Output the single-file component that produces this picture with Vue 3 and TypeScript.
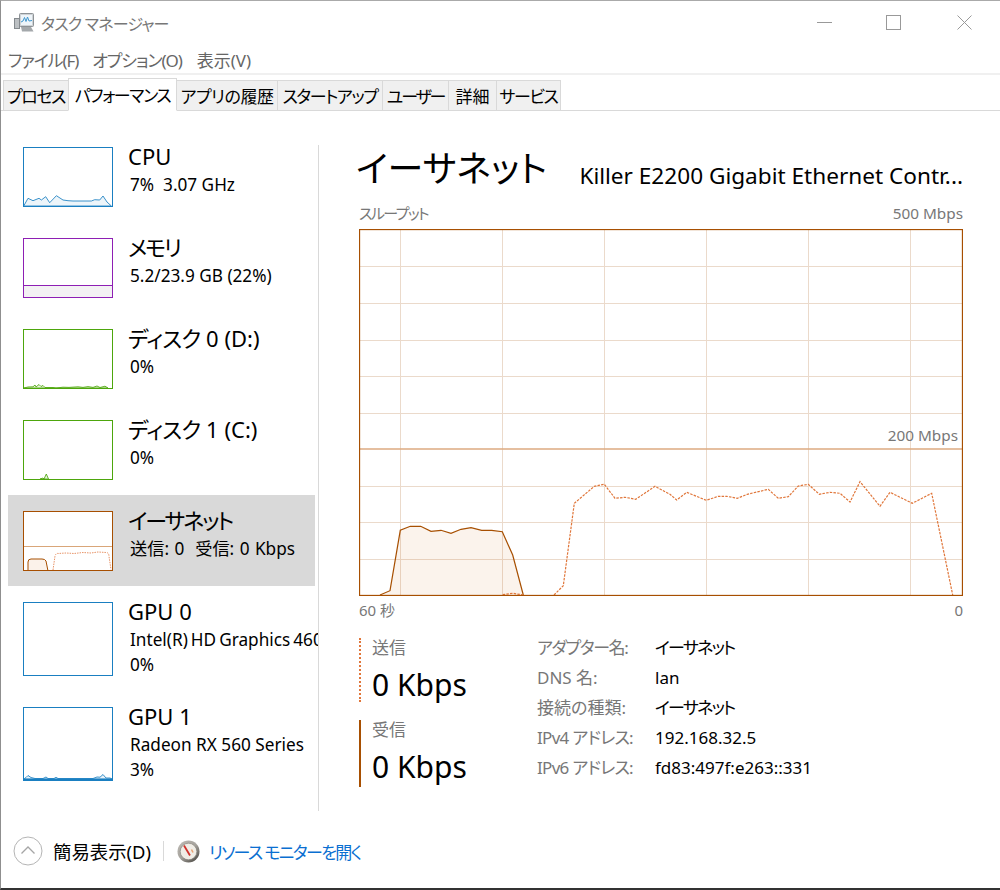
<script setup lang="ts">
interface Side {
  kana?: string
  kanaClass?: string
  rest: string
  lines: string[]
  color: string
  tall?: boolean
  selected?: boolean
  memory?: boolean
  base?: boolean
  narrow?: boolean
  area?: string
  areaFill?: string
}

const tabs = [
  { label: 'プロセス', w: 66, fit: 'tight' },
  { label: 'パフォーマンス', w: 109, active: true, fit: 'tight' },
  { label: 'アプリの履歴', w: 101, fit: 'mid' },
  { label: 'スタートアップ', w: 105, fit: 'tight' },
  { label: 'ユーザー', w: 66, fit: 'tighter' },
  { label: '詳細', w: 48, fit: '' },
  { label: 'サービス', w: 64, fit: 'tight' },
]

const items: Side[] = [
  {
    rest: 'CPU', lines: ['7%  3.07 GHz'], color: '#1a7fc1', areaFill: '#edf5fa',
    area: '0.7,59 5,51.3 10,53.7 16,51.3 18.4,53 22.7,49.7 26.7,55.7 33.4,48.7 40,53 45,53.7 50,54 68.4,54 71.7,52.7 76.7,53 80,49 84,55 88.4,59',
  },
  { kana: 'メモリ', kanaClass: 'kana', rest: '', lines: ['5.2/23.9 GB (22%)'], color: '#8e1fb4', memory: true },
  {
    kana: 'ディスク', kanaClass: 'disk', rest: ' 0 (D:)', lines: ['0%'], color: '#4da60c', areaFill: '#eaf5e0',
    area: '1,59 5,58 10,57.8 12,56 13,58 16,55.5 18,57.5 20,56.5 22,58.5 30,58.5 33,59 40,58.2 46,58.4 55,57.8 60,58.4 65,57.6 70,58.4 74,57 77,58.5 82,57.2 85,59',
  },
  {
    kana: 'ディスク', kanaClass: 'disk', rest: ' 1 (C:)', lines: ['0%'], color: '#4da60c', areaFill: '#eaf5e0',
    area: '17,59 20,58 21,59 23.3,54 25.5,59',
  },
  { kana: 'イーサネット', kanaClass: 'kana', rest: '', lines: ['送信: 0  受信: 0 Kbps'], color: '#a74f01', selected: true },
  { rest: 'GPU 0', lines: ['Intel(R) HD Graphics 4600', '0%'], color: '#1a7fc1', tall: true, narrow: true },
  {
    rest: 'GPU 1', lines: ['Radeon RX 560 Series', '3%'], color: '#1a7fc1', tall: true, base: true, areaFill: '#e8f2f9',
    area: '1,72 3,70.5 5,68.5 8,70.5 12,71.5 20,71.5 23,70 25,71.5 31,71.5 33,70.3 35,71.5 70,71.5 74,70 77,70.2 80,67.5 83,71 87,71 89,72',
  },
]

const details = [
  { label: 'アダプター名:', value: 'イーサネット', lc: 'fit-a', vc: 'fit-c' },
  { label: 'DNS 名:', value: 'lan', lc: '', vc: '' },
  { label: '接続の種類:', value: 'イーサネット', lc: '', vc: 'fit-c' },
  { label: 'IPv4 アドレス:', value: '192.168.32.5', lc: 'fit-b', vc: '' },
  { label: 'IPv6 アドレス:', value: 'fd83:497f:e263::331', lc: 'fit-b', vc: '' },
]

// Graph geometry: 604 x 367 canvas whose origin is the chart's outer corner (359, 229).
const ox = 359
const oy = 229
const W = 604
const H = 367

const shift = (pts: number[][]): string => pts.map(([x, y]) => `${x - ox},${y - oy}`).join(' ')

const hLines = [266, 303, 340, 376, 413, 486, 522, 559].map((y) => y - oy)
const vLines = [400, 502, 604, 706, 808, 910].map((x) => x - ox)

const recvPts = shift([
  [380, 595], [390, 590.7], [400.3, 530.3], [410.3, 526.3], [420.7, 526.3], [431, 531.3], [441, 530.3], [451, 533.3],
  [461, 529.3], [471, 527.7], [481.7, 530.3], [491.7, 530.3], [502.3, 531.7], [512.7, 555], [523.3, 595],
])

const sendA = shift([[502.7, 594.7], [512.7, 593.3], [523.3, 595]])
const sendB = shift([
  [554, 595], [563.3, 585.7], [574.3, 503.3], [594.3, 486.3], [604.3, 484.3], [615, 498.3], [625, 497.3], [635.7, 499.3],
  [655, 486.3], [660, 489], [670, 494.3], [676.7, 500], [686.7, 492.3], [706.3, 500.3], [718.3, 496.3], [726.7, 496.3],
  [737.3, 498.3], [747.3, 494.3], [768.3, 489.3], [778.3, 498.3], [788.3, 496.7], [798.3, 486], [808.3, 484.3],
  [819.3, 494.3], [830, 492.3], [840, 493.3], [850, 502], [860, 481.7], [880, 506.3], [890, 492.3], [912.3, 503.3],
  [931.7, 493.3], [952.7, 595],
])
</script>

<template>
  <div class="window">
    <header class="titlebar">
      <svg class="appicon" width="21" height="21" viewBox="0 0 21 21">
        <rect x="5.500" y="1.500" width="14" height="13" rx="1" fill="#cfd3d6" stroke="#8d9296" />
        <rect x="7" y="3" width="11" height="10" fill="#eef5fa" />
        <polyline points="7,10 9,9 10.500,5.500 12,9.500 13.500,5 15,9 18,8.500" fill="none" stroke="#3f97cf" stroke-width="1" />
        <rect x="0.500" y="6.500" width="5" height="10" fill="#bcc0c3" stroke="#858a8e" />
        <path d="M7 15h10l2.500 4.500H8z" fill="#a4a8ab" />
      </svg>
      <span class="apptitle">タスク マネージャー</span>
      <div class="controls">
        <svg width="15" height="15" viewBox="0 0 15 15"><path d="M0 7.500h15" stroke="#999" fill="none" /></svg>
        <svg width="15" height="15" viewBox="0 0 15 15"><rect x="0.500" y="0.500" width="14" height="14" stroke="#999" fill="none" /></svg>
        <svg class="closebtn" width="15" height="15" viewBox="0 0 15 15"><path d="M0.500 0.500l14 14M14.500 0.500l-14 14" stroke="#999" fill="none" /></svg>
      </div>
    </header>

    <nav class="menu">
      <span class="squeeze">ファイル(F)</span>
      <span class="squeeze">オプション(O)</span>
      <span class="plain">表示(V)</span>
    </nav>

    <div class="tabs">
      <div
        v-for="t in tabs"
        :key="t.label"
        class="tab"
        :class="[t.fit, { active: t.active }]"
        :style="{ width: t.w + 'px' }"
      >{{ t.label }}</div>
    </div>

    <main class="body">
      <aside class="side">
        <div
          v-for="it in items"
          :key="it.kana + it.rest"
          class="item"
          :class="{ selected: it.selected, tall: it.tall, narrow: it.narrow }"
        >
          <div class="thumb" :style="{ borderColor: it.color }">
            <svg :width="88" :height="it.tall ? 72 : 58" :viewBox="it.tall ? '1 1 88 72' : '1 1 88 58'">
              <polygon v-if="it.area" :points="it.area" :fill="it.areaFill" :stroke="it.color" stroke-width="1" stroke-opacity="0.85" />
              <template v-if="it.memory">
                <rect x="0" y="47.500" width="90" height="13" fill="#f3f1f3" />
                <path d="M0 47.500h90" stroke="#8e1fb4" />
              </template>
              <template v-if="it.selected">
                <path d="M0 35.500h90" stroke="#d9a679" />
                <path d="M5 60V51q0-3 3-3h11q3 0 4 2l2 10z" fill="#fbf2ea" stroke="#a74f01" />
                <path d="M30 59l2-14q1-3 3-2.500l8-.5 8 .5 9-1 8 .5 7-1 8 .5q3 0 3 4l2 13" fill="none" stroke="#e89468" stroke-dasharray="1.500 1" />
              </template>
              <path v-if="it.base" d="M0 72.500h90" stroke="#1a7fc1" stroke-width="1.500" />
            </svg>
          </div>
          <div class="itext">
            <div class="iname"><span v-if="it.kana" :class="it.kanaClass">{{ it.kana }}</span>{{ it.rest }}</div>
            <div v-for="l in it.lines" :key="l" class="iline">{{ l }}</div>
          </div>
        </div>
      </aside>

      <section class="panel">
        <div class="phead">
          <h1>イーサネット</h1>
          <div class="adapter">Killer E2200 Gigabit Ethernet Contr...</div>
        </div>

        <div class="axis top"><span class="thru">スループット</span><span class="num">500 Mbps</span></div>

        <div class="chart">
          <svg :width="W" :height="H" :viewBox="`0 0 ${W} ${H}`">
            <path
              v-for="y in hLines"
              :key="'h' + y"
              :d="`M1 ${y + 0.5}H${W - 1}`"
              stroke="#ebdacb"
            />
            <path
              v-for="x in vLines"
              :key="'v' + x"
              :d="`M${x + 0.5} 1V${H - 1}`"
              stroke="#ebdacb"
            />
            <polygon :points="recvPts" fill="#c6600a" fill-opacity="0.08" />
            <polyline :points="recvPts" fill="none" stroke="#a74f01" stroke-width="1.200" />
            <polyline :points="sendA" fill="none" stroke="#e0763a" stroke-width="1.200" stroke-dasharray="2.500 1.200" />
            <polyline :points="sendB" fill="none" stroke="#e0763a" stroke-width="1.200" stroke-dasharray="2.500 1.200" />
            <path :d="`M1 220H${W - 1}`" stroke="#dcaa80" stroke-width="1.500" />
            <rect x="0.500" y="0.500" :width="W - 1" :height="H - 1" fill="none" stroke="#a74f01" stroke-width="1.300" />
          </svg>
          <span class="mark">200 Mbps</span>
        </div>

        <div class="axis bottom"><span>60 秒</span><span>0</span></div>

        <div class="stats">
          <div class="rates">
            <div class="rate send">
              <div class="rlabel">送信</div>
              <div class="rvalue">0 Kbps</div>
            </div>
            <div class="rate recv">
              <div class="rlabel">受信</div>
              <div class="rvalue">0 Kbps</div>
            </div>
          </div>
          <dl class="details">
            <template v-for="d in details" :key="d.label">
              <dt :class="d.lc">{{ d.label }}</dt>
              <dd :class="d.vc">{{ d.value }}</dd>
            </template>
          </dl>
        </div>
      </section>
    </main>

    <footer class="foot">
      <svg width="30" height="30" viewBox="0 0 30 30" class="fewer">
        <circle cx="15" cy="15" r="14" fill="#fff" stroke="#b5b5b5" />
        <path d="M8.500 17.500L15 11l6.500 6.500" fill="none" stroke="#a5a5a5" stroke-width="1.300" />
      </svg>
      <span class="fewerlabel">簡易表示(D)</span>
      <span class="fsep"></span>
      <svg width="23" height="23" viewBox="0 0 23 23" class="gauge">
        <defs>
          <linearGradient id="ring" x1="0.150" y1="0.100" x2="0.850" y2="0.900">
            <stop offset="0" stop-color="#b9b6b0" />
            <stop offset="0.500" stop-color="#a5a29c" />
            <stop offset="1" stop-color="#55524d" />
          </linearGradient>
        </defs>
        <circle cx="11.500" cy="11.500" r="11" fill="url(#ring)" />
        <circle cx="11.500" cy="11.500" r="8.300" fill="#f0ede6" stroke="#8a8680" stroke-width="0.700" />
        <path d="M7 5.500L13 15.500" stroke="#d0302a" stroke-width="1.800" />
        <path d="M14.500 9.500l1.500 3" stroke="#e8a070" stroke-width="1.500" />
      </svg>
      <span class="link">リソース モニターを開く</span>
    </footer>
  </div>
</template>

<style>
html, body { margin: 0; background: #fff; }
</style>

<style scoped>
.window {
  box-sizing: border-box;
  width: 1000px;
  height: 890px;
  display: flex;
  flex-direction: column;
  overflow: hidden;
  background: #fff;
  border-top: 1px solid #aaa;
  border-left: 1px solid #8f8f8f;
  border-bottom: 2px solid #333;
  font-family: "Noto Sans", "Noto Sans CJK JP", sans-serif;
  font-feature-settings: "palt";
  color: #000;
}
.titlebar {
  height: 44px;
  flex: none;
  display: flex;
  align-items: center;
  padding: 0 28px 0 13px;
}
.appicon { flex: none; margin-top: -1px; }
.apptitle { margin-left: 6px; font-size: 16px; letter-spacing: -0.8px; color: #777; margin-top: -1px; }
.controls {
  margin-left: auto;
  display: flex;
  gap: 54px;
  margin-top: -1px;
}
.closebtn { margin-left: 2px; }
.menu {
  flex: none;
  height: 30px;
  display: flex;
  align-items: center;
  gap: 14px;
  padding-left: 7px;
  font-size: 17px;
  color: #666;
  border-bottom: 2px solid #f0f0f0;
  box-sizing: border-box;
}
.menu .squeeze { letter-spacing: -1.100px; }
.menu .plain { margin-left: 1px; }
.tabs {
  flex: none;
  height: 36px;
  box-sizing: border-box;
  display: flex;
  align-items: flex-end;
  padding-left: 2px;
  border-bottom: 1px solid #d9d9d9;
}
.tab {
  box-sizing: border-box;
  height: 31px;
  margin-bottom: -1px;
  background: #f0f0f0;
  border: 1px solid #d9d9d9;
  border-left-width: 0;
  display: flex;
  align-items: center;
  justify-content: center;
  font-size: 17px;
  white-space: nowrap;
}
.tab.tight { letter-spacing: -1.400px; }
.tab.tighter { letter-spacing: -2.200px; }
.tab.mid { letter-spacing: -0.500px; }
.tab:first-child { border-left-width: 1px; }
.tab.active {
  height: 33px;
  background: #fff;
  border-bottom-color: #fff;
  border-left-width: 1px;
  margin-left: -1px;
}
.body {
  flex: 1;
  min-height: 0;
  display: flex;
}
.side {
  flex: none;
  width: 318px;
  box-sizing: border-box;
  padding: 20px 0 0 7px;
  margin-bottom: 3px;
  position: relative;
  display: flex;
  flex-direction: column;
  overflow: hidden;
}
.side::after {
  content: "";
  position: absolute;
  right: 0;
  top: 34px;
  bottom: 0;
  width: 1px;
  background: #d9d9d9;
}
.item {
  width: 307px;
  height: 91px;
  flex: none;
  box-sizing: border-box;
  display: flex;
  padding: 16px 0 0 15px;
}
.item.tall { height: 105px; }
.item.selected { background: #d9d9d9; }
.item.selected .iline { word-spacing: 1px; }
.item.narrow .iline { word-spacing: -1.400px; }
.thumb {
  flex: none;
  box-sizing: border-box;
  width: 90px;
  height: 60px;
  border: 1px solid;
  background: #fff;
}
.thumb svg { display: block; }
.tall .thumb { height: 74px; }
.itext {
  margin-left: 15px;
  white-space: nowrap;
  margin-top: -6px;
}
.iname { font-size: 22px; line-height: 31px; white-space: pre; }
.iname .kana { letter-spacing: -2.100px; }
.iname .disk { letter-spacing: -0.800px; }
.iline { font-size: 17.200px; line-height: 25px; margin-left: 2px; white-space: pre; }
.panel {
  flex: 1;
  min-width: 0;
  padding: 0 37px 0 40px;
  display: flex;
  flex-direction: column;
}
.phead {
  height: 93px;
  flex: none;
  display: flex;
  align-items: flex-start;
  justify-content: space-between;
  padding-top: 28px;
  box-sizing: border-box;
}
h1 {
  margin: 0 0 0 -3px;
  font-size: 36px;
  font-weight: 400;
  line-height: 60px;
  white-space: nowrap;
}
.adapter { font-size: 22.600px; line-height: 31px; margin-top: 21px; white-space: nowrap; }
.axis {
  flex: none;
  display: flex;
  justify-content: space-between;
  font-size: 15px;
  color: #777;
}
.axis.top { height: 25px; line-height: 18px; }
.axis.bottom { height: 24px; line-height: 28px; }
.axis .thru { letter-spacing: -1.600px; }
.axis .num { font-size: 15.300px; }
.chart {
  flex: none;
  width: 604px;
  height: 367px;
  position: relative;
}
.chart svg { display: block; }
.mark {
  position: absolute;
  right: 5px;
  top: 196px;
  font-size: 15.300px;
  color: #777;
  line-height: 20px;
}
.stats {
  display: flex;
  margin-top: 18px;
}
.rates {
  width: 178px;
  flex: none;
}
.rate {
  border-left: 2px solid #a74f01;
  padding-left: 11px;
  box-sizing: border-box;
}
.rate.send {
  border-left: 2px dotted #e0763a;
  height: 64px;
  margin-bottom: 18px;
}
.rate.recv { height: 67px; }
.rlabel { font-size: 17px; line-height: 20px; color: #777; }
.rvalue { font-size: 30px; line-height: 42px; margin-top: 6px; white-space: nowrap; }
.details {
  margin: 0;
  display: grid;
  grid-template-columns: 118px auto;
  grid-auto-rows: 30px;
  align-content: start;
  font-size: 17px;
  line-height: 20px;
}
.details dt { color: #777; white-space: nowrap; }
.details dd { margin: 0; white-space: nowrap; }
.details .fit-a { letter-spacing: -1.400px; }
.details .fit-b { letter-spacing: -0.700px; }
.details .fit-c { letter-spacing: -1.800px; }
.foot {
  flex: none;
  height: 74px;
  display: flex;
  align-items: center;
  padding-left: 12px;
  box-sizing: border-box;
}
.fewerlabel { font-size: 18.400px; margin-left: 10px; white-space: nowrap; }
.fsep { width: 1px; height: 20px; background: #d9d9d9; margin-left: 12px; }
.gauge { margin-left: 13px; }
.link { font-size: 17px; letter-spacing: -1.650px; color: #0a6fd1; margin-left: 9px; white-space: nowrap; }
</style>
